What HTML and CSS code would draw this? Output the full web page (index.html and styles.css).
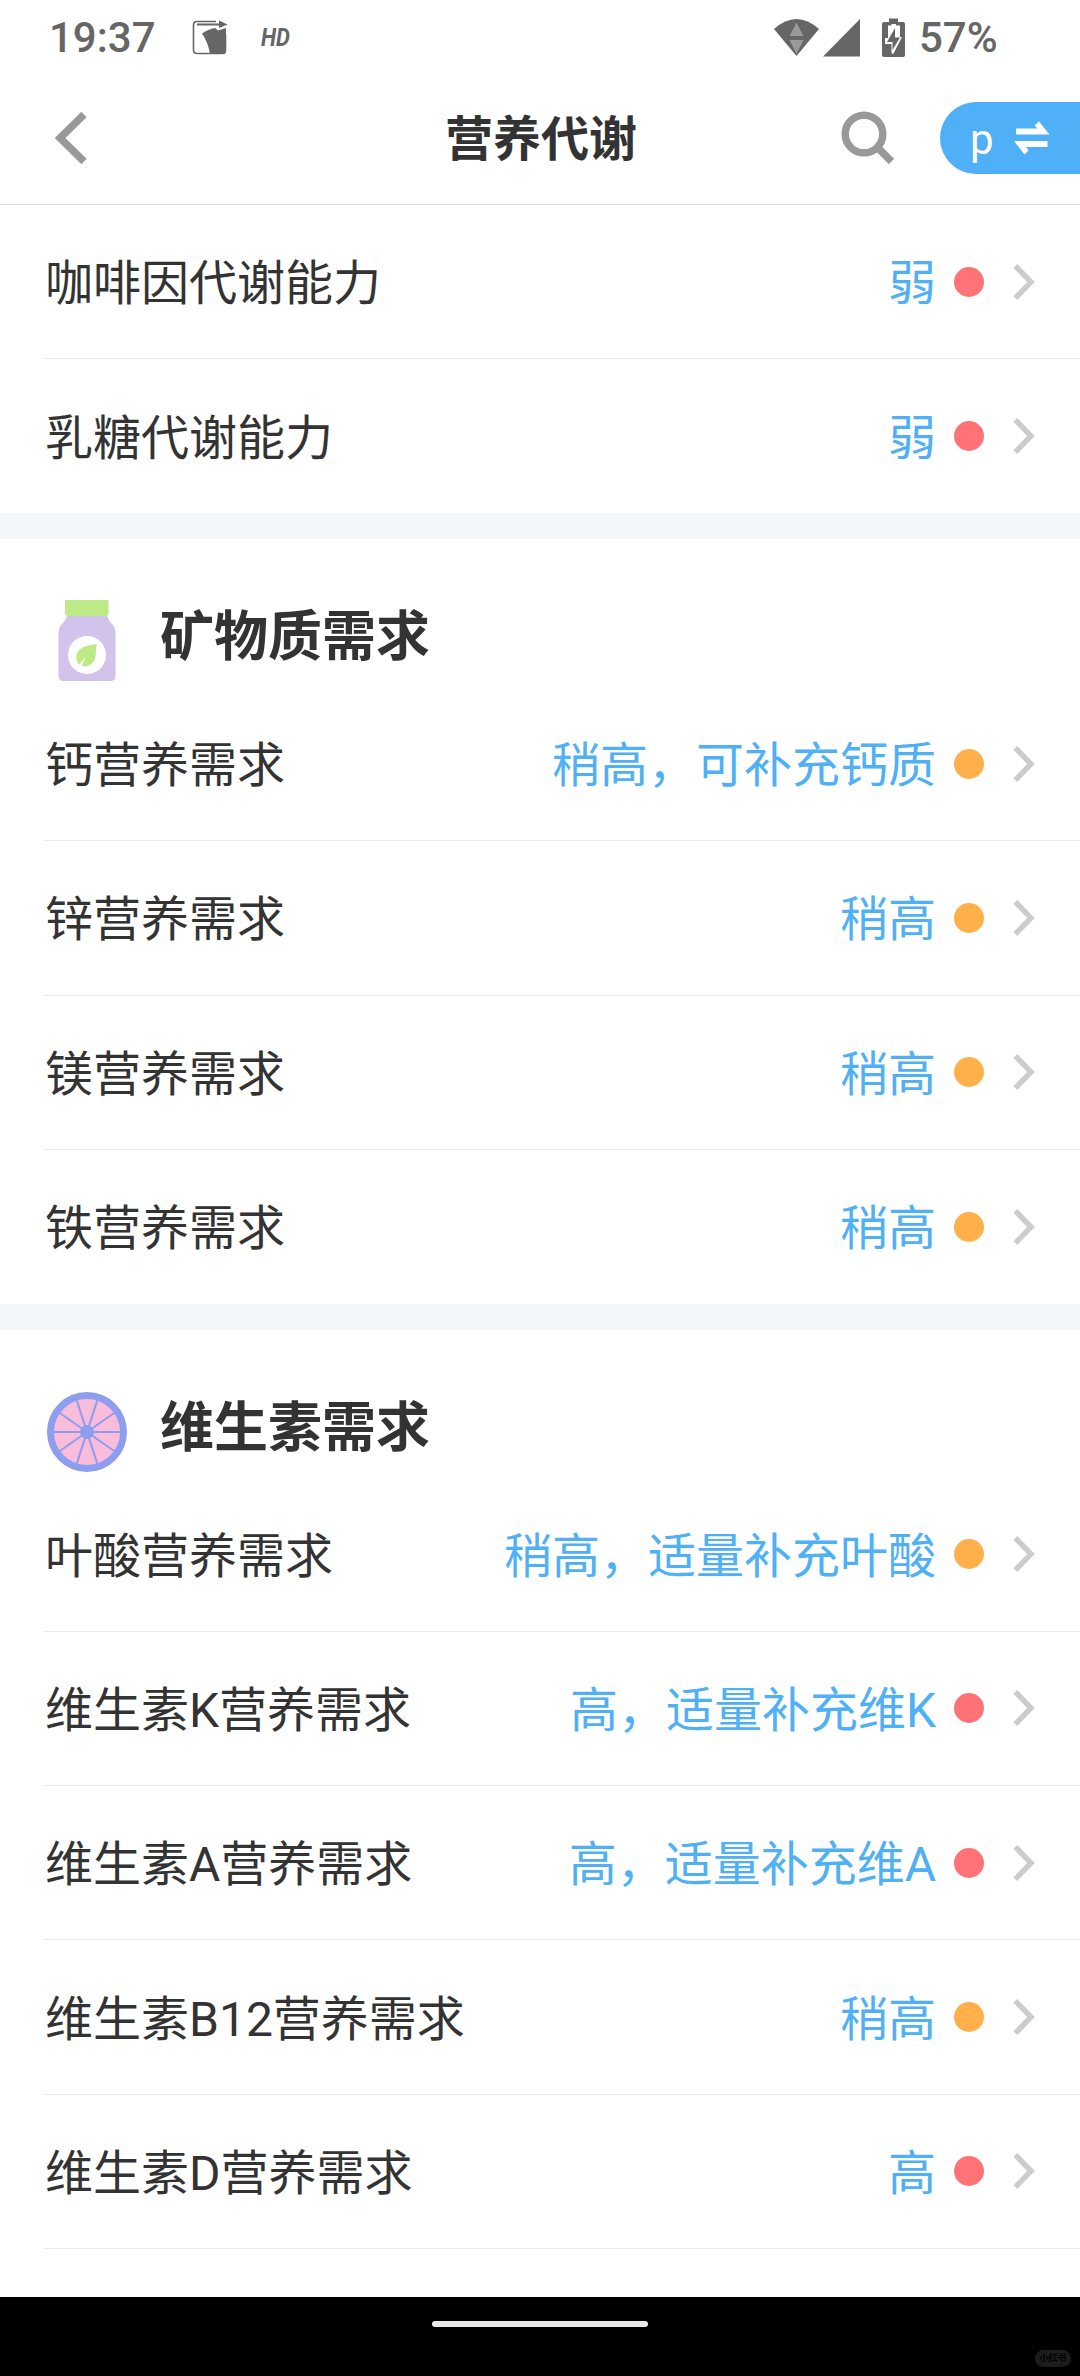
FILE: index.html
```html
<!DOCTYPE html>
<html lang="zh-CN">
<head>
<meta charset="utf-8">
<title>营养代谢</title>
<link rel="stylesheet" href="styles.css">
</head>
<body>
<svg width="0" height="0" class="defs">
  <symbol id="chev" viewBox="0 0 22 38"><path d="M2.3 2.8 18 19 2.3 35.200" fill="none" stroke="#ccc" stroke-width="5.500"/></symbol>
</svg>
<div class="status">
  <span class="time">19:37</span>
  <svg class="app" width="36" height="36" viewBox="0 0 36 36"><path d="M24 1.500H5Q1.500 1.500 1.500 5V30Q1.500 33.500 5 33.500H30Q33.500 33.500 33.500 30V14" fill="none" stroke="#666" stroke-width="1.600"/><path d="M5 3.600 27 3.400V.5L35.500 4.500 27 8V5.600H5Z" fill="#666"/><path d="M10 13.500Q16 9 23 8L26 10.500 34 8V31Q34 34 31 34H18Q16 22 10 13.500Z" fill="#666"/></svg>
  <span class="hd">HD</span>
  <svg class="sys" width="134" height="40" viewBox="0 0 134 40"><path d="M0 11Q22.500-9 45 11L22.500 38Z" fill="#666"/><path d="M15.500 18 22.500 4.500 29.500 18ZM15.500 22H29.500L22.500 36Z" fill="#999"/><path d="M49 38.500 86 1V38.500Z" fill="#666"/><path d="M115 4V.5H124V4H129Q131 4 131 6V37Q131 39 129 39H110Q108 39 108 37V6Q108 4 110 4Z" fill="#666"/><path d="M114 7.500H117.500V6H122V7.500H126V19H128L119.500 35.500Q118 37 117.500 34V26H111V20H114Z" fill="#fff"/><path d="M121 10 113 24H118.500V32L126 19.500H121Z" fill="#666"/></svg>
  <span class="pct">57%</span>
</div>
<header class="bar">
  <svg class="back" width="34" height="54" viewBox="0 0 34 54"><path d="M29 3.500 5 27 29 50.500" fill="none" stroke="#999" stroke-width="7.500"/></svg>
  <h1>营养代谢</h1>
  <svg class="search" width="54" height="54" viewBox="0 0 54 54"><circle cx="23" cy="23" r="18.800" fill="none" stroke="#999" stroke-width="7.500"/><path d="M36 36 50.500 50.500" stroke="#999" stroke-width="7.500"/></svg>
  <div class="switch"><span>p</span><svg width="36" height="34" viewBox="0 0 36 34"><path d="M2 7.500H23.500L20.500 4.500 25 .5 35.500 13.500H2ZM0 20H33.500V26H12L14.500 29.500 10.500 33.500Z" fill="#fff"/></svg></div>
</header>
<main>
  <section>
    <div class="row"><span class="name">咖啡因代谢能力</span><span class="val">弱</span><i class="dot red"></i><svg class="chev"><use href="#chev"/></svg></div>
    <div class="row"><span class="name">乳糖代谢能力</span><span class="val">弱</span><i class="dot red"></i><svg class="chev"><use href="#chev"/></svg></div>
  </section>
  <section>
    <div class="head">
      <svg width="86" height="86" viewBox="0 0 86 86"><path d="M26 17H66Q67 22 72 27 74.500 30 74.500 34V78Q74.500 83 69.500 83H22.500Q17.500 83 17.500 78V34Q17.500 30 20 27 26 21 26 17Z" fill="#d2c3ec"/><path d="M24 2H67.500V15Q67.500 18 64.500 18H27Q24 18 24 15Z" fill="#bdea86"/><circle cx="46" cy="57" r="19" fill="#fff"/><path d="M56 46C45 47 37 50 35.500 57Q35 63 38 66.500L45 59 40.500 68Q48 70 53 63C56 58 54 52 56 46Z" fill="#bdea86"/></svg>
      <h2>矿物质需求</h2>
    </div>
    <div class="row"><span class="name">钙营养需求</span><span class="val">稍高，可补充钙质</span><i class="dot"></i><svg class="chev"><use href="#chev"/></svg></div>
    <div class="row"><span class="name">锌营养需求</span><span class="val">稍高</span><i class="dot"></i><svg class="chev"><use href="#chev"/></svg></div>
    <div class="row"><span class="name">镁营养需求</span><span class="val">稍高</span><i class="dot"></i><svg class="chev"><use href="#chev"/></svg></div>
    <div class="row"><span class="name">铁营养需求</span><span class="val">稍高</span><i class="dot"></i><svg class="chev"><use href="#chev"/></svg></div>
  </section>
  <section class="open">
    <div class="head">
      <svg width="86" height="86" viewBox="0 0 86 86"><circle cx="46" cy="43" r="36.500" fill="#fabcdb" stroke="#8c9eed" stroke-width="7"/><g stroke="#8c9eed" stroke-width="2"><path d="M12 43H80"/><path d="M12 43H80" transform="rotate(35 46 43)"/><path d="M12 43H80" transform="rotate(72 46 43)"/><path d="M12 43H80" transform="rotate(108 46 43)"/><path d="M12 43H80" transform="rotate(145 46 43)"/></g><circle cx="46" cy="43" r="7" fill="#8c9eed"/></svg>
      <h2>维生素需求</h2>
    </div>
    <div class="row"><span class="name">叶酸营养需求</span><span class="val">稍高，适量补充叶酸</span><i class="dot"></i><svg class="chev"><use href="#chev"/></svg></div>
    <div class="row"><span class="name">维生素K营养需求</span><span class="val">高，适量补充维K</span><i class="dot red"></i><svg class="chev"><use href="#chev"/></svg></div>
    <div class="row"><span class="name">维生素A营养需求</span><span class="val">高，适量补充维A</span><i class="dot red"></i><svg class="chev"><use href="#chev"/></svg></div>
    <div class="row"><span class="name">维生素B12营养需求</span><span class="val">稍高</span><i class="dot"></i><svg class="chev"><use href="#chev"/></svg></div>
    <div class="row"><span class="name">维生素D营养需求</span><span class="val">高</span><i class="dot red"></i><svg class="chev"><use href="#chev"/></svg></div>
  </section>
</main>
<footer class="nav"><div class="pill"></div><span class="mark">小红书</span></footer>
</body>
</html>
```

FILE: styles.css
```css
* { box-sizing: border-box; margin: 0; padding: 0; }
body { width: 1080px; height: 2376px; background: #fff; color: #333; font-family: Roboto, "Noto Sans CJK SC", sans-serif; display: flex; flex-direction: column; overflow: hidden; }
svg { display: block; flex: none; }
.defs { position: absolute; }
.status { height: 76px; display: flex; align-items: center; color: #666; padding-left: 49px; font-weight: 500; flex: none; }
.time, .pct { font-size: 42px; line-height: 76px; }
.time { width: 143px; }
.hd { margin-left: 33px; font: italic 700 25px/70px Roboto, sans-serif; width: 480px; transform: scaleX(.88); transform-origin: 0 50%; }
.sys { margin-left: 33px; }
.pct { margin-left: 11px; }
.bar { height: 129px; flex: none; display: flex; align-items: center; border-bottom: 1px solid #ddd; padding: 0 0 4px 55px; }
h1 { font-size: 48px; font-weight: 700; margin: 4px 0 0 356px; width: 396px; line-height: 70px; }
.switch { margin-left: 45px; width: 140px; height: 72px; border-radius: 36px 0 0 36px; background: #4fb0f7; color: #fff; font-size: 42px; display: flex; align-items: center; gap: 20px; padding-left: 30px; }
.switch span { padding-top: 2px; }
main { height: 2092px; flex: none; overflow: hidden; }
section { border-bottom: 26px solid #f3f7f9; }
.open { border-bottom: 0; }
.head { height: 148px; padding: 59px 0 0 41px; display: flex; }
h2 { font-size: 54px; font-weight: 700; line-height: 78px; margin: 1px 0 0 33px; }
.row { height: 154.330px; margin-left: 44px; padding: 0 45px 0 1px; border-bottom: 1px solid #e8e8e8; display: flex; align-items: center; font-size: 48px; }
section:not(.open) .row:last-child { border-bottom: 0; height: 153.600px; }
.name, .val { padding-bottom: 5px; }
.name { flex: 1; }
.val { color: #4fb0f5; }
.dot { width: 30px; height: 30px; border-radius: 50%; background: #ffb04b; margin: 0 29px 0 18px; }
.red { background: #ff7376; }
.chev { width: 22px; height: 38px; }
.nav { flex: 1; background: #000; position: relative; }
.pill { width: 216px; height: 6px; margin: 24px auto 0; border-radius: 3px; background: #e8e8e8; }
.mark { position: absolute; right: 9px; bottom: 9px; width: 36px; height: 17px; border-radius: 9px; background: #1c1c1c; color: #000; font-size: 9px; font-weight: 700; line-height: 17px; text-align: center; }
```
